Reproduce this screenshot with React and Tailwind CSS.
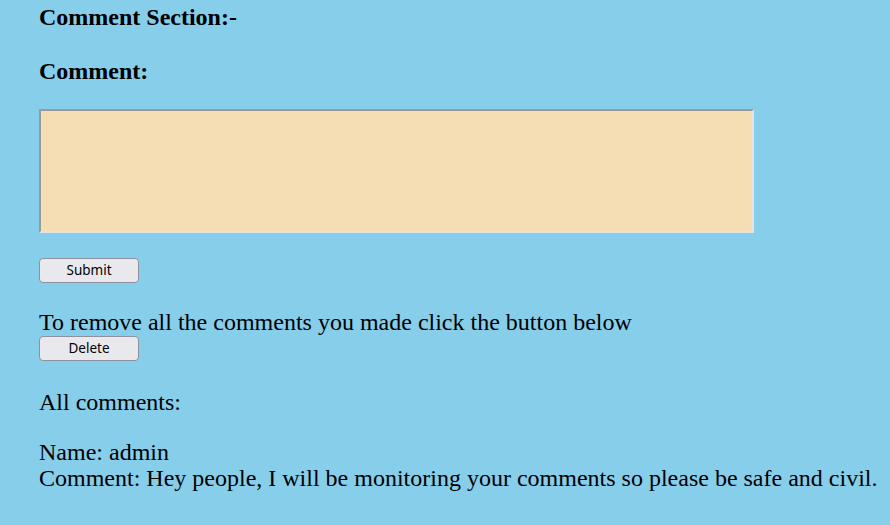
export default function App() {
  return (
    <div className="min-h-[525px] w-full bg-[#87ceeb] text-black" style={{ fontFamily: '"Liberation Serif", serif' }}>
      <div className="pl-[39px] pb-6">
        <h3 className="text-[24px] font-bold leading-[28px] pt-[3px]">Comment Section:-</h3>
        <h3 className="text-[24px] font-bold leading-[28px] mt-[26px]">Comment:</h3>
        <textarea
          className="block mt-[24px] w-[715px] h-[124px] bg-[#f5deb3] border-2 border-t-[#999] border-l-[#999] border-b-[#e3e3e3] border-r-[#e3e3e3] outline-none resize-none"
        />
        <button className="block mt-[25px] w-[100px] h-[25px] bg-[#e9e9ed] border border-[#8f8f9d] rounded-[4px] text-[13.5px] leading-none" style={{ fontFamily: '"Noto Sans", sans-serif' }}>
          Submit
        </button>
        <p className="mt-[26px] text-[24px] leading-[27px]">To remove all the comments you made click the button below</p>
        <button className="block w-[100px] h-[25px] bg-[#e9e9ed] border border-[#8f8f9d] rounded-[4px] text-[13.5px] leading-none" style={{ fontFamily: '"Noto Sans", sans-serif' }}>
          Delete
        </button>
        <p className="mt-[28px] text-[24px] leading-[26px]">All comments:</p>
        <p className="mt-[24px] text-[24px] leading-[26px]">Name: admin</p>
        <p className="text-[24px] leading-[26px]">Comment: Hey people, I will be monitoring your comments so please be safe and civil.</p>
      </div>
    </div>
  )
}
